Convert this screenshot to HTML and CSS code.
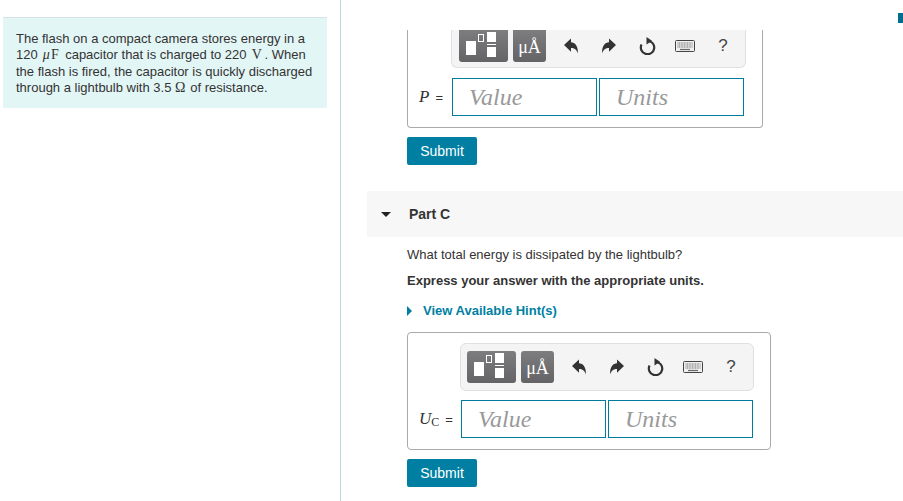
FILE: index.html
```html
<!DOCTYPE html>
<html lang="en">
<head>
    <meta charset="UTF-8">
    <meta name="viewport" content="width=device-width, initial-scale=1.0">
    <title>Part C</title>
    <link rel="stylesheet" href="styles.css">
</head>
<body>

    <svg class="defs">
        <defs>
            <symbol id="fraction" viewBox="0 0 49 32">
                <rect x="7" y="11" width="10" height="14" fill="#fff"/>
                <rect x="19.5" y="4.5" width="5" height="7" fill="none" stroke="#fff"/>
                <rect x="28" y="2" width="9" height="10" fill="#fff"/>
                <rect x="28" y="14" width="9" height="1" fill="#fff"/>
                <rect x="28" y="17" width="9" height="10" fill="#fff"/>
            </symbol>
            <symbol id="undo" viewBox="0 0 14 16">
                <path d="M0 7 7 .5V4.300C11 4.500 14 7.500 14 15.500 12.500 11.500 10.500 10 7 10V13.800z" fill="#333"/>
            </symbol>
            <symbol id="redo" viewBox="0 0 14 16">
                <path d="M14 7 7 .5V4.300C3 4.500 0 7.500 0 15.500 1.500 11.500 3.500 10 7 10V13.800z" fill="#333"/>
            </symbol>
            <symbol id="reset" viewBox="0 0 17 18">
                <path d="M8.500 3.800a6.700 6.700 0 1 1-6 3.800" fill="none" stroke="#333" stroke-width="2.200"/>
                <path d="M7.500 0 13 3.800 7.500 7.500z" fill="#333"/>
            </symbol>
            <symbol id="keyboard" viewBox="0 0 20 12">
                <rect x=".5" y=".5" width="19" height="11" rx="1" fill="#f0f0f0" stroke="#444"/>
                <path d="M2.500 3h15M2.500 5h15M2.500 7h15" stroke="#666" stroke-dasharray="1 .6"/>
                <path d="M5 9.500h10" stroke="#666" stroke-width="1.200"/>
            </symbol>
        </defs>
    </svg>

    <div class="page">
        <div class="left-pane">
            <div class="intro">
                The flash on a compact camera stores energy in a 120 <span class="math"><i>&mu;</i>F</span> capacitor that is charged to 220 <span class="math">V</span>. When the flash is fired, the capacitor is quickly discharged through a lightbulb with 3.5 <span class="math ohm">&Omega;</span> of resistance.
            </div>
        </div>

        <div class="right-pane">
            <div class="part-body">
                <div class="answer-box cut-off">
                    <div class="toolbar">
                        <div class="tool-btn wide"><svg width="49" height="32"><use href="#fraction"/></svg></div>
                        <div class="tool-btn narrow">&mu;&Aring;</div>
                        <div class="tool-icon"><svg width="14" height="16"><use href="#undo"/></svg></div>
                        <div class="tool-icon"><svg width="14" height="16"><use href="#redo"/></svg></div>
                        <div class="tool-icon"><svg width="17" height="18"><use href="#reset"/></svg></div>
                        <div class="tool-icon"><svg width="20" height="12"><use href="#keyboard"/></svg></div>
                        <div class="tool-icon help">?</div>
                    </div>
                    <div class="answer-row">
                        <span class="var"><i>P</i><span class="eq">=</span></span>
                        <input class="field" placeholder="Value">
                        <input class="field" placeholder="Units">
                    </div>
                </div>
                <button class="submit">Submit</button>
            </div>

            <div class="part-header">
                <span class="caret-down"></span>
                <span class="part-title">Part C</span>
            </div>

            <div class="part-body">
                <p class="question">What total energy is dissipated by the lightbulb?</p>
                <p class="instruction">Express your answer with the appropriate units.</p>
                <div class="hint"><span class="caret-right"></span>View Available Hint(s)</div>

                <div class="answer-box">
                    <div class="toolbar">
                        <div class="tool-btn wide"><svg width="49" height="32"><use href="#fraction"/></svg></div>
                        <div class="tool-btn narrow">&mu;&Aring;</div>
                        <div class="tool-icon"><svg width="14" height="16"><use href="#undo"/></svg></div>
                        <div class="tool-icon"><svg width="14" height="16"><use href="#redo"/></svg></div>
                        <div class="tool-icon"><svg width="17" height="18"><use href="#reset"/></svg></div>
                        <div class="tool-icon"><svg width="20" height="12"><use href="#keyboard"/></svg></div>
                        <div class="tool-icon help">?</div>
                    </div>
                    <div class="answer-row">
                        <span class="var"><i>U</i><sub>C</sub><span class="eq">=</span></span>
                        <input class="field" placeholder="Value">
                        <input class="field" placeholder="Units">
                    </div>
                </div>
                <button class="submit">Submit</button>
            </div>
        </div>

        <div class="scroll-mark"></div>
    </div>

</body>
</html>
```

FILE: styles.css
```css
html, body {
    margin: 0;
    height: 100%;
    overflow: hidden;
    background: white;
}
body {
    font-family: "Liberation Sans", Arial, sans-serif;
    font-size: 13px;
    color: #333;
}
.defs {
    display: none;
}
.page {
    display: flex;
    height: 501px;
    position: relative;
}
.left-pane {
    width: 337px;
    flex: none;
    border-right: 1px solid #bcd6e6;
    padding: 17px 0 0 3px;
}
.intro {
    width: 324px;
    height: 91px;
    box-sizing: border-box;
    background: #e3f6f6;
    border-top: 1px solid #d6e4e8;
    padding: 13px 10px 0 13px;
    line-height: 16.25px;
}
.math {
    margin: 0 1.5px;
    font-family: "Liberation Serif", serif;
    font-size: 14px;
    line-height: 0;
    letter-spacing: 1.2px;
}
.math.ohm {
    margin: 0;
}
.right-pane {
    flex: 1;
    padding: 30px 0 0 26px;
}
.part-body {
    padding-left: 40px;
}
.answer-box {
    width: fit-content;
    border: 1px solid #aaa;
    border-radius: 4px;
    padding: 10px 17px 11px 11px;
    margin-bottom: 9px;
}
.answer-box.cut-off {
    border-top: none;
    border-radius: 0 0 4px 4px;
    padding: 0 18px 11px 11px;
}
.toolbar {
    display: flex;
    align-items: center;
    box-sizing: border-box;
    width: 294px;
    height: 48px;
    margin: 0 -1px 9px auto;
    padding-left: 6px;
    background: #f4f4f4;
    border: 1px solid #e0e0e0;
    border-radius: 6px;
}
.cut-off .toolbar {
    width: 295px;
    height: 38px;
    margin: 0 -2px 10px auto;
    padding-left: 7px;
    align-items: flex-start;
    border-top: none;
    border-radius: 0 0 6px 6px;
}
.tool-btn {
    height: 32px;
    flex: none;
    border-radius: 3px;
    background: linear-gradient(#7d7d80, #646466);
    color: white;
}
.cut-off .tool-btn {
    border-radius: 0 0 3px 3px;
}
.tool-btn.wide {
    width: 49px;
    margin-right: 5px;
}
.tool-btn.wide svg {
    display: block;
}
.tool-btn.narrow {
    width: 33px;
    margin-right: 6px;
    font-family: "Liberation Serif", serif;
    font-size: 18px;
    line-height: 34px;
    text-align: center;
}
.tool-icon {
    width: 38px;
    height: 32px;
    flex: none;
    display: flex;
    align-items: center;
    justify-content: center;
}
.tool-icon.help {
    font-size: 17px;
    color: #444;
}
.answer-row {
    display: flex;
    align-items: center;
    gap: 2px;
}
.var {
    width: 31px;
    flex: none;
    font-family: "Liberation Serif", serif;
    font-size: 17px;
    white-space: nowrap;
}
.var sub {
    font-size: 12px;
    line-height: 0;
    vertical-align: -2px;
}
.eq {
    margin-left: 6px;
    font-family: "Liberation Sans", sans-serif;
    font-size: 13px;
}
.answer-box:not(.cut-off) .var {
    width: 40px;
}
.field {
    width: 145px;
    height: 38px;
    box-sizing: border-box;
    border: 1px solid #007c9e;
    border-radius: 0;
    padding: 0 0 0 16px;
    font-family: "Liberation Serif", serif;
    font-style: italic;
    font-size: 24px;
    background: white;
    outline: none;
}
.field::placeholder {
    color: #999;
    opacity: 1;
}
.submit {
    display: block;
    width: 70px;
    height: 28px;
    padding: 0;
    background-color: #007fa3;
    color: white;
    border: none;
    border-radius: 2px;
    font-family: "Liberation Sans", Arial, sans-serif;
    font-size: 14px;
    cursor: pointer;
}
.part-header {
    display: flex;
    align-items: center;
    height: 46px;
    margin-top: 26px;
    background: #f7f7f7;
    font-weight: bold;
    font-size: 14px;
}
.caret-down {
    width: 0;
    height: 0;
    margin-left: 14px;
    margin-right: 18px;
    border-left: 5px solid transparent;
    border-right: 5px solid transparent;
    border-top: 5px solid #222;
}
.question {
    margin: 10px 0 0;
    line-height: 16px;
}
.instruction {
    margin: 10px 0 0;
    line-height: 16px;
    font-weight: bold;
}
.hint {
    display: flex;
    align-items: center;
    margin: 14px 0 13px;
    line-height: 16px;
    font-weight: bold;
    color: #007fa3;
}
.caret-right {
    width: 0;
    height: 0;
    margin-right: 11px;
    border-top: 5px solid transparent;
    border-bottom: 5px solid transparent;
    border-left: 5px solid #007fa3;
}
.scroll-mark {
    position: absolute;
    left: 898px;
    top: 13px;
    width: 5px;
    height: 10px;
    background: #006f8e;
}
```
